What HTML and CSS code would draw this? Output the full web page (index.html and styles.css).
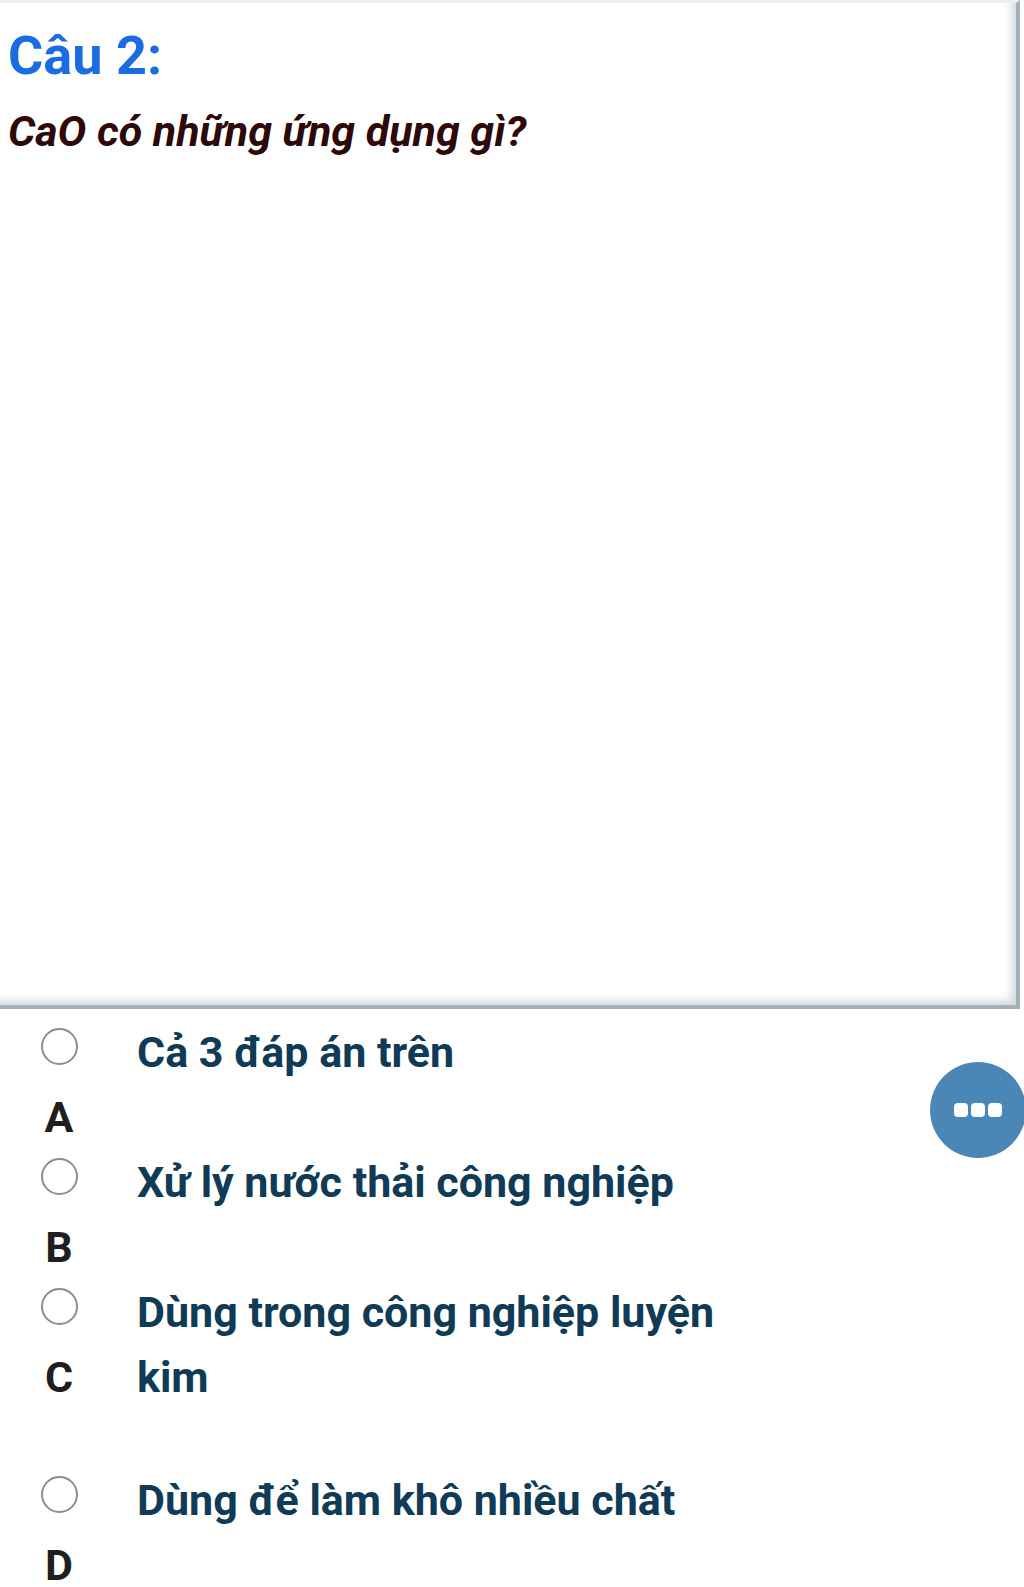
FILE: index.html
```html
<!DOCTYPE html>
<html lang="vi">
<head>
<meta charset="utf-8">
<title>Câu 2</title>
<link rel="stylesheet" href="styles.css">
</head>
<body>
<div class="card">
  <h1 class="title">Câu 2:</h1>
  <p class="question">CaO có những ứng dụng gì?</p>
</div>
<div class="options">
  <div class="option">
    <div class="mark"><span class="radio"></span><span class="letter">A</span></div>
    <div class="text">Cả 3 đáp án trên</div>
  </div>
  <div class="option">
    <div class="mark"><span class="radio"></span><span class="letter">B</span></div>
    <div class="text">Xử lý nước thải công nghiệp</div>
  </div>
  <div class="option">
    <div class="mark"><span class="radio"></span><span class="letter">C</span></div>
    <div class="text">Dùng trong công nghiệp luyện kim</div>
  </div>
  <div class="option">
    <div class="mark"><span class="radio"></span><span class="letter">D</span></div>
    <div class="text">Dùng để làm khô nhiều chất</div>
  </div>
</div>
<div class="fab"><span class="dot"></span><span class="dot"></span><span class="dot"></span></div>
</body>
</html>
```
FILE: styles.css
```css
html, body {
  margin: 0;
  padding: 0;
  background: #ffffff;
}
body {
  font-family: Roboto, "Noto Sans", "DejaVu Sans", sans-serif;
  position: relative;
  width: 1024px;
  height: 1587px;
  overflow: hidden;
}
.card {
  box-sizing: border-box;
  width: 1020px;
  height: 1009px;
  padding: 19px 8px 0 8px;
  border-top: 3px solid #eceff2;
  border-right: 4px solid #a3b0b8;
  border-bottom: 4px solid #a3b0b8;
  box-shadow: inset -8px -8px 8px -4px rgba(160, 176, 188, 0.5);
}
.title {
  margin: 0;
  font-size: 54px;
  line-height: 67px;
  font-weight: 700;
  color: #1b6ce0;
}
.question {
  margin: 16px 0 0 0;
  font-size: 43px;
  line-height: 53px;
  font-weight: 700;
  font-style: italic;
  color: #2e0909;
}
.options {
  padding-top: 11px;
}
.option {
  display: flex;
  align-items: flex-start;
}
.mark {
  width: 38px;
  margin-left: 40px;
  display: flex;
  flex-direction: column;
  align-items: center;
}
.radio {
  height: 65px;
  width: 38px;
  display: flex;
  align-items: center;
  justify-content: center;
}
.radio::before {
  content: "";
  box-sizing: border-box;
  width: 37px;
  height: 37px;
  margin-bottom: 12px;
  border: 2.5px solid #8e8e8e;
  border-radius: 50%;
}
.letter {
  font-size: 43px;
  line-height: 65px;
  font-weight: 700;
  color: #1f1f1f;
}
.text {
  width: 600px;
  margin-left: 59px;
  padding-bottom: 58px;
  font-size: 43px;
  line-height: 65px;
  font-weight: 700;
  color: #0f3b57;
}
.fab {
  position: absolute;
  left: 930px;
  top: 1062px;
  width: 96px;
  height: 96px;
  border-radius: 50%;
  background: #4b87b6;
  display: flex;
  align-items: center;
  justify-content: center;
  gap: 3px;
}
.dot {
  width: 14px;
  height: 14px;
  border-radius: 4px;
  background: #ffffff;
}
```
